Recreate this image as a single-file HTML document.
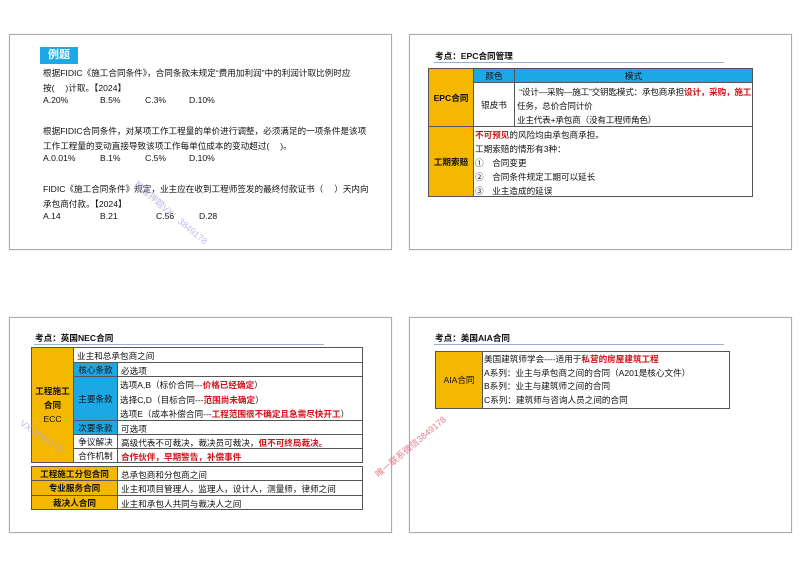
<!DOCTYPE html>
<html><head><meta charset="utf-8"><style>
body{margin:0;width:800px;height:566px;background:#fff;position:relative;overflow:hidden;font-family:"Liberation Sans","Noto Sans CJK SC",sans-serif;font-size:8.6px;color:#111}
.p{position:absolute;border:1px solid #aaa;background:#fff;box-shadow:0 0 1px #ccc}
.a{position:absolute;white-space:nowrap}
.c{position:absolute;box-sizing:border-box;border:1px solid #555;white-space:nowrap;overflow:hidden}
.y{background:#f5b800}
.b{background:#1ca8e6}
.r{color:#d0121b;font-weight:bold}
.t{position:absolute;font-weight:bold;font-size:8.6px;white-space:nowrap}
.u{position:absolute;height:1px;background:#9aaed0}
.ctr{display:flex;align-items:center;justify-content:center;text-align:center}
.wm{position:absolute;color:#b7a6e0;font-size:9px;white-space:nowrap;transform:rotate(40deg);transform-origin:left top;opacity:.8}
</style></head><body>

<div class="p" style="left:9px;top:34px;width:381px;height:214px"></div>
<div class="p" style="left:409px;top:34px;width:381px;height:214px"></div>
<div class="p" style="left:9px;top:317px;width:381px;height:214px"></div>
<div class="p" style="left:409px;top:317px;width:381px;height:214px"></div>

<!-- panel 1 -->
<div class="a" style="left:40px;top:47px;width:38px;height:17px;background:#1ca8e6;color:#fff;font-weight:bold;font-size:11px;line-height:17px;text-align:center">例题</div>
<div class="a" style="left:43px;top:66px;line-height:14.5px">根据FIDIC《施工合同条件》，合同条款未规定“费用加利润”中的利润计取比例时应<br>按(　 )计取。【2024】</div>
<div class="a" style="left:43px;top:95px">A.20%</div><div class="a" style="left:100px;top:95px">B.5%</div><div class="a" style="left:145px;top:95px">C.3%</div><div class="a" style="left:189px;top:95px">D.10%</div>
<div class="a" style="left:43px;top:124px;line-height:14.5px">根据FIDIC合同条件，对某项工作工程量的单价进行调整，必须满足的一项条件是该项<br>工作工程量的变动直接导致该项工作每单位成本的变动超过(　 )。</div>
<div class="a" style="left:43px;top:153px">A.0.01%</div><div class="a" style="left:100px;top:153px">B.1%</div><div class="a" style="left:145px;top:153px">C.5%</div><div class="a" style="left:189px;top:153px">D.10%</div>
<div class="a" style="left:43px;top:182px;line-height:14.5px">FIDIC《施工合同条件》规定，业主应在收到工程师签发的最终付款证书（　 ）天内向<br>承包商付款。【2024】</div>
<div class="a" style="left:43px;top:211px">A.14</div><div class="a" style="left:100px;top:211px">B.21</div><div class="a" style="left:156px;top:211px">C.56</div><div class="a" style="left:199px;top:211px">D.28</div>
<div class="wm" style="left:140px;top:178px">精准押题VX：3849178</div>

<!-- panel 2 -->
<div class="t" style="left:435px;top:50px">考点：EPC合同管理</div>
<div class="u" style="left:434px;top:62px;width:290px"></div>
<div class="c y ctr" style="left:428px;top:68px;width:46px;height:59px;font-weight:bold">EPC合同</div>
<div class="c b ctr" style="left:473px;top:68px;width:42px;height:15px">颜色</div>
<div class="c b ctr" style="left:514px;top:68px;width:239px;height:15px">模式</div>
<div class="c ctr" style="left:473px;top:82px;width:42px;height:45px">银皮书</div>
<div class="c" style="left:514px;top:82px;width:239px;height:45px"></div>
<div class="a" style="left:517px;top:85px;line-height:14px;letter-spacing:-0.2px">&nbsp;“设计—采购—施工”交钥匙模式：承包商承担<span class="r">设计，采购，施工</span><br>任务，总价合同计价<br>业主代表+承包商（没有工程师角色）</div>
<div class="c y ctr" style="left:428px;top:126px;width:46px;height:71px;font-weight:bold">工期索赔</div>
<div class="c" style="left:473px;top:126px;width:280px;height:71px"></div>
<div class="a" style="left:475px;top:128px;line-height:14px"><span class="r">不可预见</span>的风险均由承包商承担。<br>工期索赔的情形有3种：<br>①　合同变更<br>②　合同条件规定工期可以延长<br>③　业主造成的延误</div>

<!-- panel 3 -->
<div class="t" style="left:35px;top:332px">考点：英国NEC合同</div>
<div class="u" style="left:34px;top:344px;width:290px"></div>
<div class="c y ctr" style="left:31px;top:347px;width:43px;height:116px;font-weight:bold;line-height:14px;flex-direction:column"><div>工程施工</div><div>合同</div><div style="font-weight:normal">ECC</div></div>
<div class="c" style="left:73px;top:347px;width:290px;height:16px;padding:2px 3px">业主和总承包商之间</div>
<div class="c b ctr" style="left:73px;top:362px;width:45px;height:15px">核心条款</div>
<div class="c" style="left:117px;top:362px;width:246px;height:15px;padding:2px 3px">必选项</div>
<div class="c b ctr" style="left:73px;top:376px;width:45px;height:45px">主要条款</div>
<div class="c" style="left:117px;top:376px;width:246px;height:45px"></div>
<div class="a" style="left:120px;top:378px;line-height:14.5px">选项A,B（标价合同---<span class="r">价格已经确定</span>）<br>选择C,D（目标合同---<span class="r">范围尚未确定</span>）<br>选项E（成本补偿合同---<span class="r">工程范围很不确定且急需尽快开工</span>）</div>
<div class="c b ctr" style="left:73px;top:420px;width:45px;height:15px">次要条款</div>
<div class="c" style="left:117px;top:420px;width:246px;height:15px;padding:2px 3px">可选项</div>
<div class="c ctr" style="left:73px;top:434px;width:45px;height:15px">争议解决</div>
<div class="c" style="left:117px;top:434px;width:246px;height:15px;padding:2px 3px">高级代表不可裁决，裁决员可裁决，<span class="r">但不可终局裁决。</span></div>
<div class="c ctr" style="left:73px;top:448px;width:45px;height:15px">合作机制</div>
<div class="c" style="left:117px;top:448px;width:246px;height:15px;padding:2px 3px"><span class="r">合作伙伴，早期警告，补偿事件</span></div>
<div class="c y ctr" style="left:31px;top:466px;width:87px;height:15px;font-weight:bold">工程施工分包合同</div>
<div class="c" style="left:117px;top:466px;width:246px;height:15px;padding:2px 3px">总承包商和分包商之间</div>
<div class="c y ctr" style="left:31px;top:480px;width:87px;height:16px;font-weight:bold">专业服务合同</div>
<div class="c" style="left:117px;top:480px;width:246px;height:16px;padding:2px 3px">业主和项目管理人，监理人，设计人，测量师，律师之间</div>
<div class="c y ctr" style="left:31px;top:495px;width:87px;height:15px;font-weight:bold">裁决人合同</div>
<div class="c" style="left:117px;top:495px;width:246px;height:15px;padding:2px 3px">业主和承包人共同与裁决人之间</div>
<div class="wm" style="left:24px;top:418px;transform:rotate(35deg)">VX:3849178</div>

<!-- panel 4 -->
<div class="t" style="left:435px;top:332px">考点：美国AIA合同</div>
<div class="u" style="left:434px;top:344px;width:290px"></div>
<div class="c y ctr" style="left:435px;top:351px;width:48px;height:58px">AIA合同</div>
<div class="c" style="left:482px;top:351px;width:248px;height:58px"></div>
<div class="a" style="left:484px;top:353px;line-height:13.5px">美国建筑师学会----适用于<span class="r">私营的房屋建筑工程</span><br>A系列：业主与承包商之间的合同（A201是核心文件）<br>B系列：业主与建筑师之间的合同<br>C系列：建筑师与咨询人员之间的合同</div>
<div class="wm" style="left:372px;top:470px;color:#e06070;transform:rotate(-40deg)">唯一联系微信3849178</div>
</body></html>
